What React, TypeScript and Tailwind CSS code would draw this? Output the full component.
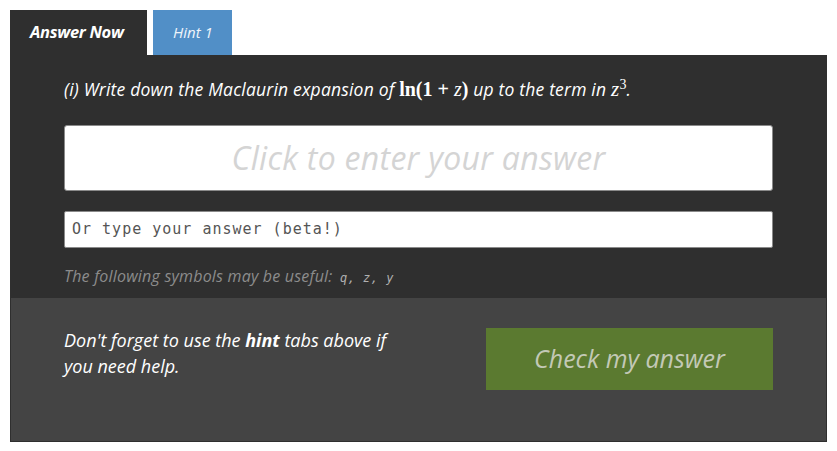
const sans = "font-['Open_Sans','Lato',sans-serif]";

function Tabs() {
  return (
    <div className="flex items-end gap-[6px] pl-[10px] pt-[10px]">
      <div className="flex h-[45px] w-[137px] items-center bg-[#2f2f2f] pl-[20px] text-[16.5px] font-bold italic tracking-[-0.3px] text-white">
        Answer Now
      </div>
      <div className="flex h-[45px] w-[79px] items-center bg-[#518fc7] pl-[20px] text-[15px] italic text-[#eef4fa]">
        Hint 1
      </div>
    </div>
  );
}

function Question() {
  return (
    <p className="text-[17.5px] leading-[26px] italic tracking-[0.2px] text-white">
      (i) Write down the Maclaurin expansion of{' '}
      <span className="font-['Liberation_Serif',serif] text-[20px] font-semibold not-italic tracking-normal">
        ln(1 + <i className="font-normal">z</i>)
      </span>{' '}
      up to the term in{' '}
      <span className="font-['Liberation_Serif',serif] text-[21px]">
        z<sup className="not-italic text-[14px]">3</sup>
      </span>
      .
    </p>
  );
}

export default function App() {
  return (
    <div className={`${sans} min-h-[451px] w-[837px] bg-white`}>
      <Tabs />
      <div className="mr-[10px] ml-[10px] border border-[#2f2f2f] bg-[#2f2f2f]">
        <section className="px-[53px] pt-[20px] pb-[10px]">
          <Question />
          <div className="mt-[23px] flex h-[66px] items-center justify-center rounded-[3px] border border-[#8a8a8a] bg-white text-[32px] italic tracking-[0.3px] text-[#d4d4d4]">
            Click to enter your answer
          </div>
          <div className="mt-[20px] flex h-[37px] items-center rounded-[2px] border border-[#8a8a8a] bg-white pl-[7px] font-['DejaVu_Sans_Mono',monospace] text-[15px] tracking-[1px] text-[#555]">
            Or type your answer (beta!)
          </div>
          <p className="mt-[18px] text-[16px] leading-[20px] italic tracking-[0.2px] text-[#8c8c8c]">
            The following symbols may be useful:{' '}
            <span className="ml-[3px] font-['DejaVu_Sans_Mono',monospace] text-[12px] italic tracking-[0.5px] text-[#b0b0b0]">
              q, z, y
            </span>
          </p>
        </section>
        <section className="flex h-[143px] items-start justify-between bg-[#444444] pr-[53px] pl-[53px] pt-[30px]">
          <p className="-mt-[1px] text-[18px] leading-[26px] italic text-white">
            Don't forget to use the <b>hint</b> tabs above if
            <br />
            you need help.
          </p>
          <button className="h-[62px] w-[287px] shrink-0 bg-[#5b7a30] text-[25px] italic text-[#c3c9b6]">
            Check my answer
          </button>
        </section>
      </div>
    </div>
  );
}
